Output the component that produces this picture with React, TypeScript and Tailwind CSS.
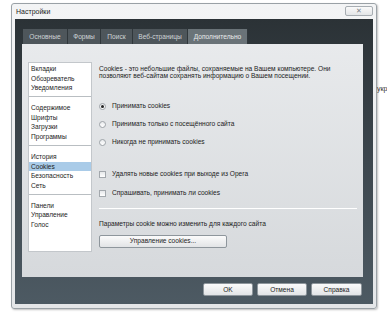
import React from 'react'

const font = { fontFamily: '"Liberation Sans", "Noto Sans", sans-serif' }

const groups = [
  ['Вкладки', 'Обозреватель', 'Уведомления'],
  ['Содержимое', 'Шрифты', 'Загрузки', 'Программы'],
  ['История', 'Cookies', 'Безопасность', 'Сеть'],
  ['Панели', 'Управление', 'Голос'],
]

const tabs = [
  { t: 'Основные', w: 'w-[45px]' },
  { t: 'Формы', w: 'w-[33px]' },
  { t: 'Поиск', w: 'w-[32px]' },
  { t: 'Веб-страницы', w: 'w-[55px]' },
  { t: 'Дополнительно', w: 'w-[60px]' },
]

function Radio({ checked, label }: { checked?: boolean; label: string }) {
  return (
    <div className="flex items-center h-[10px]">
      <div className="w-[7px] h-[7px] rounded-full border border-[#9ea3a8] bg-gradient-to-b from-[#e9ebed] to-white flex items-center justify-center">
        {checked && <div className="w-[3px] h-[3px] rounded-full bg-[#222]" />}
      </div>
      <span className="ml-[6px]">{label}</span>
    </div>
  )
}

function Check({ label }: { label: string }) {
  return (
    <div className="flex items-center h-[10px]">
      <div className="w-[7px] h-[7px] border border-[#a3a8ad] bg-gradient-to-b from-[#e6e8ea] to-white" />
      <span className="ml-[6px]">{label}</span>
    </div>
  )
}

function Btn({ label, w }: { label: string; w: string }) {
  return (
    <div className={`${w} h-[13px] border border-[#8e969c] rounded-[2px] bg-gradient-to-b from-[#fbfbfb] to-[#e2e4e6] flex items-center justify-center text-[#222]`}>
      {label}
    </div>
  )
}

export default function App() {
  return (
    <div className="w-[387px] h-[320px] bg-white relative overflow-hidden text-[6.6px] text-[#1c1c1c]" style={font}>
      <span className="absolute left-[377px] top-[84px] text-[7px] text-[#333]">укр</span>

      <div className="ml-[11px] mt-[3px] w-[366px] h-[306px] rounded-[3px] border border-[#9aa1a6] bg-gradient-to-b from-[#f3f4f5] to-[#e4e6e8] shadow-[1px_1px_2px_rgba(0,0,0,0.25)] flex flex-col">
        <div className="h-[15px] flex items-center justify-between pl-[4px] pr-[3px]">
          <span className="text-[7px] text-[#222] mt-[2px]">Настройки</span>
          <div className="w-[28px] h-[10px] -mt-[1px] border border-[#a7adb2] rounded-[2px] bg-gradient-to-b from-[#fafafa] to-[#e3e5e7] flex items-center justify-center text-[7px] text-[#7a8086]">
            ✕
          </div>
        </div>

        <div className="mx-[3px] h-[285px] bg-gradient-to-b from-[#2b3236] via-[#3d474e] to-[#4d5a63] flex flex-col">
          <div className="h-[25px] flex items-end pl-[8px]">
            {tabs.map((tab, i) => (
              <div
                key={tab.t}
                className={`${tab.w} h-[15px] flex items-center justify-center border-r border-[#30373b] ${
                  i === 4 ? 'bg-[#6a7378] text-[#e9ebec]' : 'bg-[#4e565b] text-[#cfd4d7]'
                }`}
              >
                {tab.t}
              </div>
            ))}
          </div>

          <div className="ml-[7px] mr-[10px] h-[233px] bg-gradient-to-b from-[#e8eaec] to-[#d6d9dc] flex">
            <div className="ml-[6px] mt-[18px] w-[64px] h-[190px] bg-white border border-[#c3c7cb] flex flex-col">
              {groups.map((g, gi) => (
                <div key={gi} className={`${gi === 0 ? 'pt-[1px]' : 'pt-[6px] border-t border-[#b9bec2]'} pb-[3px]`}>
                  {g.map((item) => (
                    <div
                      key={item}
                      className={`h-[9.7px] leading-[9.7px] pl-[2px] ${item === 'Cookies' ? 'bg-[#a9cbe8]' : ''}`}
                    >
                      {item}
                    </div>
                  ))}
                </div>
              ))}
            </div>

            <div className="ml-[7px] flex-1 pr-[6px] flex flex-col">
              <div className="mt-[21px] leading-[7px]">
                <div>Cookies - это небольшие файлы, сохраняемые на Вашем компьютере. Они</div>
                <div>позволяют веб-сайтам сохранять информацию о Вашем посещении.</div>
              </div>
              <div className="mt-[22px] flex flex-col gap-[8px]">
                <Radio checked label="Принимать cookies" />
                <Radio label="Принимать только с посещённого сайта" />
                <Radio label="Никогда не принимать cookies" />
              </div>
              <div className="mt-[22px] flex flex-col gap-[9px]">
                <Check label="Удалять новые cookies при выходе из Opera" />
                <Check label="Спрашивать, принимать ли cookies" />
              </div>
              <div className="mt-[10px] h-px bg-[#c4c8cc] border-b border-white" />
              <div className="mt-[10px]">Параметры cookie можно изменить для каждого сайта</div>
              <div className="mt-[6px]">
                <Btn label="Управление cookies..." w="w-[128px]" />
              </div>
            </div>
          </div>

          <div className="mt-[6px] mr-[11px] flex justify-end gap-[4px]">
            <Btn label="OK" w="w-[50px]" />
            <Btn label="Отмена" w="w-[50px]" />
            <Btn label="Справка" w="w-[51px]" />
          </div>
        </div>
      </div>
    </div>
  )
}
